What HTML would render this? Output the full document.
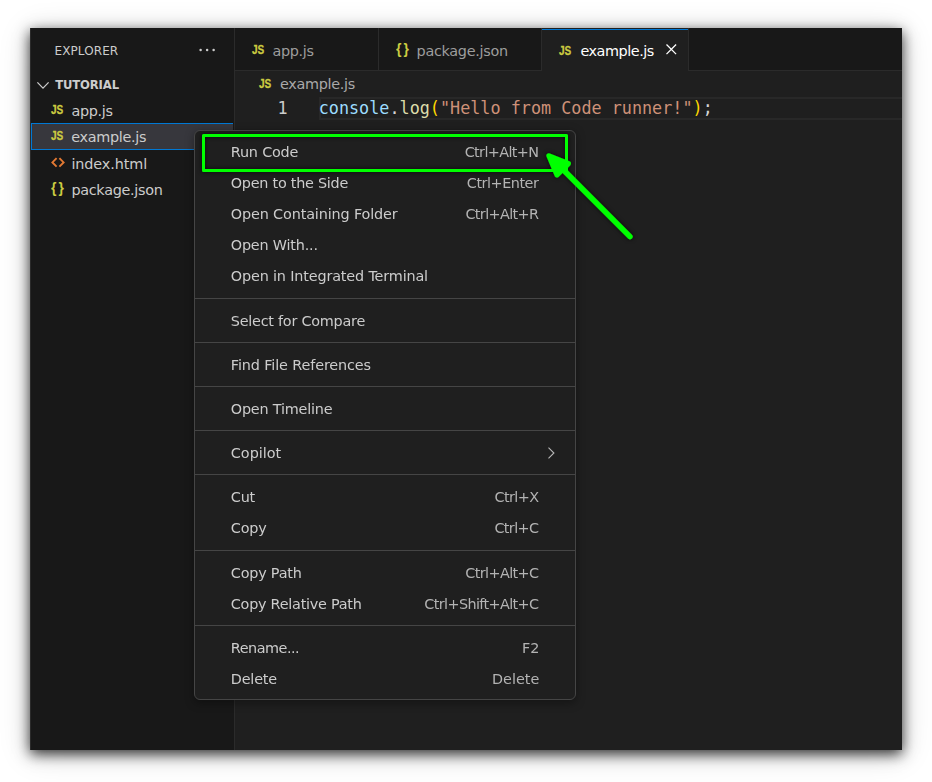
<!DOCTYPE html>
<html lang="en">
<head>
<meta charset="utf-8">
<title>Run Code - Code Runner context menu</title>
<style>
*{box-sizing:border-box;margin:0;padding:0}
html,body{width:932px;height:782px;overflow:hidden;background:#fff}
body{font-family:"DejaVu Sans","Liberation Sans",sans-serif;color:#ccc;position:relative}
.win{position:absolute;left:30px;top:28px;width:872px;height:722px;background:#1f1f1f;
  box-shadow:0 4px 13px rgba(0,0,0,.8),0 4px 30px rgba(0,0,0,.16);overflow:hidden}
/* sidebar */
.side{position:absolute;left:0;top:0;width:205px;height:722px;background:#181818;border-right:1px solid #2b2b2b}
.side .edge{position:absolute;left:0;top:0;width:1px;height:722px;background:#2b2b2b}
.side .title{position:absolute;left:0;top:0;height:42px;width:100%}
.t{position:absolute;white-space:nowrap;line-height:1}
.side .title .t{left:24.5px;top:17.3px;font-size:12px;color:#ccc;letter-spacing:.1px}
.dots{position:absolute;left:168px;top:19px;width:20px;height:6px}
.pane{position:absolute;left:0;top:42px;width:100%;height:26.4px}
.pane .t{left:25.2px;top:10px;font-size:11.6px;letter-spacing:-.12px;font-weight:bold;color:#ccc}
.pane svg{position:absolute;left:4.8px;top:7.9px}
.row{position:absolute;left:0;width:203.2px;height:26.4px}
.row.sel{left:1px;width:202.2px;background:#37373d;border:1.2px solid #0078d4;border-right:0}
.row .ic{position:absolute;font-weight:bold;white-space:nowrap;line-height:1}
.row .nm{letter-spacing:-.3px;position:absolute;left:41.4px;top:7.4px;font-size:14.4px;white-space:nowrap;line-height:1;color:#ccc}
.js{color:#cbcb41}
.jsi{-webkit-text-stroke:.3px #cbcb41;font-family:"Liberation Sans",sans-serif;font-size:12.6px !important;display:inline-block;transform:scaleX(.8);transform-origin:0 0}
.br{font-family:"Liberation Sans",sans-serif;letter-spacing:2px}.or{color:#e37933}
/* tabs */
.tabs{position:absolute;left:205px;top:0;right:0;height:43px;background:#181818;border-bottom:1px solid #2b2b2b}
.tab{position:absolute;top:0;height:42px;border-right:1px solid #2b2b2b;color:#9d9d9d}
.tab.act{background:#1f1f1f;color:#fff;height:43px}
.tab.act .bl{position:absolute;left:0;right:0;top:1px;height:1px;background:#0078d4}
.tab .ic{position:absolute;font-weight:bold;white-space:nowrap;line-height:1}
.tab .nm{letter-spacing:-.3px;position:absolute;font-size:14.4px;white-space:nowrap;line-height:1;top:15.8px}
/* editor */
.bc{position:absolute;left:204.4px;top:42px;right:0;height:26.4px}
.bc .nm{letter-spacing:-.2px;position:absolute;font-size:14.4px;color:#a9a9a9;white-space:nowrap;line-height:1}
.bc .ic{position:absolute;font-weight:bold;line-height:1}
.code{position:absolute;left:204.4px;top:69px;right:0;height:23px;font-family:"DejaVu Sans Mono","Liberation Mono",monospace;font-size:16.8px;line-height:23px;white-space:pre}
.code .ln{position:absolute;left:0;top:0;width:53.2px;text-align:right;color:#ccc}
.code .cur{position:absolute;left:84.6px;right:0;top:0;height:23px;border:2px solid #282828;border-right:0}
.code .src{position:absolute;left:84.3px;top:0}
/* menu */
.menu{position:absolute;left:164px;top:102px;width:382px;background:#1f1f1f;border:1px solid #454545;border-radius:6px;
  box-shadow:0 2.4px 9.6px rgba(0,0,0,.36);padding:5px 0;font-size:14.4px;color:#ccc;will-change:transform}
.mi{position:relative;height:31px;margin:0 5px;line-height:31px;white-space:nowrap}
.mi .lb{position:absolute;left:30.8px;top:.7px;letter-spacing:-.2px}
.mi .kb{position:absolute;right:31.2px;top:.7px;color:#b3b3b3;letter-spacing:-.62px;margin-right:.4px}
.mi .kb.n{letter-spacing:0;margin-right:-.5px}
.mi.g1 .lb,.mi.g1 .kb{top:-.3px}
.mi.h{height:31.5px;line-height:31.5px}
.sep{height:1px;background:#454545;margin:6px 0}
.mi svg{position:absolute;right:11.2px;top:8.4px}
.anno{position:absolute;left:0;top:0;width:932px;height:782px;pointer-events:none}
</style>
</head>
<body>
<div class="win">
  <div class="side">
    <div class="edge"></div>
    <div class="title"><span class="t">EXPLORER</span>
      <svg class="dots" viewBox="0 0 20 6"><circle cx="2.6" cy="3" r="1.25" fill="#ccc"/><circle cx="9.1" cy="3" r="1.25" fill="#ccc"/><circle cx="15.6" cy="3" r="1.25" fill="#ccc"/></svg>
    </div>
    <div class="pane">
      <svg width="16" height="16" viewBox="0 0 16 16"><path d="M2.4 4.4 L8 10.2 L13.6 4.4" fill="none" stroke="#ccc" stroke-width="1.25"/></svg>
      <span class="t">TUTORIAL</span>
    </div>
    <div class="row" style="top:68.4px"><span class="ic js jsi" style="left:21px;top:8px">JS</span><span class="nm">app.js</span></div>
    <div class="row sel" style="top:95px;height:27px"><span class="ic js jsi" style="left:18.8px;top:6.2px">JS</span><span class="nm" style="left:39.2px;top:5.6px">example.js</span></div>
    <div class="row" style="top:121.2px"><svg class="ic" style="left:21px;top:8px" width="14" height="11" viewBox="0 0 14 11"><path d="M5.6 1.2 L1.4 5.4 L5.6 9.6 M8.4 1.2 L12.6 5.4 L8.4 9.6" fill="none" stroke="#e37933" stroke-width="1.9"/></svg><span class="nm" style="top:7.6px;letter-spacing:-.1px">index.html</span></div>
    <div class="row" style="top:147.6px"><span class="ic js br" style="left:21px;top:5.5px;font-size:14px">{}</span><span class="nm" style="top:7.2px">package.json</span></div>
  </div>
  <div class="tabs">
    <div class="tab" style="left:0;width:144px"><span class="ic js jsi" style="left:17px;top:15.5px">JS</span><span class="nm" style="left:37.4px">app.js</span></div>
    <div class="tab" style="left:144px;width:163px"><span class="ic js br" style="left:17px;top:14px;font-size:14px">{}</span><span class="nm" style="left:37.6px">package.json</span></div>
    <div class="tab act" style="left:307px;width:146.6px"><span class="ic js jsi" style="left:17.4px;top:16.5px">JS</span><span class="nm" style="left:38.4px;top:15.8px;letter-spacing:-.45px">example.js</span>
      <svg style="position:absolute;left:123px;top:15.2px" width="13" height="13" viewBox="0 0 13 13"><path d="M1.5 1.5 L11.1 11.1 M11.1 1.5 L1.5 11.1" stroke="#fff" stroke-width="1.3" fill="none"/></svg><div class="bl"></div>
    </div>
  </div>
  <div class="bc"><span class="ic js jsi" style="left:24.6px;top:7.5px">JS</span><span class="nm" style="left:45.6px;top:7.4px;letter-spacing:-.3px">example.js</span></div>
  <div class="code"><span class="ln">1</span><div class="cur"></div><span class="src"><span style="color:#9cdcfe">console</span><span style="color:#d4d4d4">.</span><span style="color:#dcdcaa">log</span><span style="color:#ffd700">(</span><span style="color:#ce9178">"Hello from Code runner!"</span><span style="color:#ffd700">)</span><span style="color:#d4d4d4">;</span></span></div>

  <div class="menu">
    <div class="mi g1" style="margin-top:1px"><span class="lb">Run Code</span><span class="kb">Ctrl+Alt+N</span></div>
    <div class="mi g1"><span class="lb" style="letter-spacing:-0.260px">Open to the Side</span><span class="kb" style="letter-spacing:-.47px;margin-right:.4px">Ctrl+Enter</span></div>
    <div class="mi g1"><span class="lb" style="letter-spacing:-0.140px">Open Containing Folder</span><span class="kb">Ctrl+Alt+R</span></div>
    <div class="mi g1"><span class="lb">Open With...</span></div>
    <div class="mi g1"><span class="lb" style="letter-spacing:-0.160px">Open in Integrated Terminal</span></div>
    <div class="sep"></div>
    <div class="mi"><span class="lb" style="letter-spacing:-0.245px">Select for Compare</span></div>
    <div class="sep"></div>
    <div class="mi"><span class="lb" style="letter-spacing:-0.125px">Find File References</span></div>
    <div class="sep"></div>
    <div class="mi"><span class="lb">Open Timeline</span></div>
    <div class="sep"></div>
    <div class="mi"><span class="lb" style="letter-spacing:0.000px">Copilot</span><svg width="16" height="16" viewBox="0 0 16 16"><path d="M5.5 2.6 L10.9 8 L5.5 13.4" fill="none" stroke="#b8b8b8" stroke-width="1.1"/></svg></div>
    <div class="sep"></div>
    <div class="mi h"><span class="lb">Cut</span><span class="kb">Ctrl+X</span></div>
    <div class="mi h"><span class="lb">Copy</span><span class="kb">Ctrl+C</span></div>
    <div class="sep"></div>
    <div class="mi"><span class="lb">Copy Path</span><span class="kb">Ctrl+Alt+C</span></div>
    <div class="mi"><span class="lb" style="letter-spacing:-0.250px">Copy Relative Path</span><span class="kb">Ctrl+Shift+Alt+C</span></div>
    <div class="sep"></div>
    <div class="mi"><span class="lb" style="letter-spacing:-0.480px">Rename...</span><span class="kb n">F2</span></div>
    <div class="mi"><span class="lb">Delete</span><span class="kb n">Delete</span></div>
  </div>
</div>
<svg class="anno" viewBox="0 0 932 782">
  <defs><filter id="sh" x="-10%" y="-20%" width="120%" height="140%"><feDropShadow dx="0" dy="0" stdDeviation="2.2" flood-color="#000" flood-opacity=".8"/></filter></defs>
  <g filter="url(#sh)">
    <rect x="203.5" y="135.5" width="363" height="35" fill="none" stroke="#00ff00" stroke-width="3" stroke-linejoin="round"/>
    <path d="M630 236.6 L562 168.5" stroke="#00ff00" stroke-width="5.4" stroke-linecap="round" fill="none"/>
    <path d="M548.9 155.8 L568.4 163.6 L557 174.9 Z" fill="#00ff00" stroke="#00ff00" stroke-width="5" stroke-linejoin="round"/>
  </g>
</svg>
</body>
</html>
